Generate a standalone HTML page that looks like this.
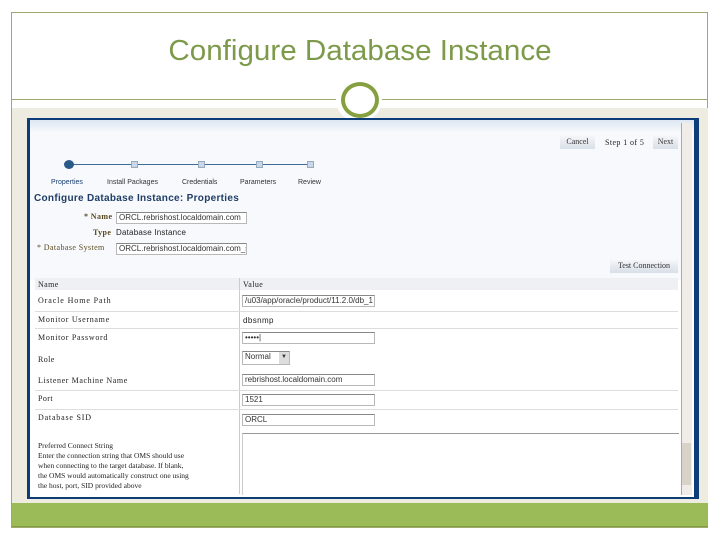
<!DOCTYPE html>
<html><head><meta charset="utf-8"><style>
*{margin:0;padding:0;box-sizing:border-box}
body{width:720px;height:540px;background:#fff;position:relative;overflow:hidden;font-family:"Liberation Serif",serif}
.a{position:absolute}
.s{font-family:"Liberation Sans",sans-serif}
.inp{position:absolute;background:#fff;border:1px solid #b8b8b8;border-top-color:#888;height:12px;font:8px "Liberation Sans",sans-serif;color:#333;padding-left:2px;line-height:10px;white-space:nowrap;overflow:hidden}
.lbl{position:absolute;font-size:8px;color:#222;white-space:nowrap;letter-spacing:0.4px}
.btn{position:absolute;background:linear-gradient(#f4f6f9,#d8dfe8);font-size:8px;color:#333;text-align:center;line-height:12px;height:13px}
.hl{position:absolute;left:35px;width:643px;height:1px;background:#ddd}
</style></head><body>
<div class="a" style="left:11px;top:12px;width:697px;height:516px;border:1px solid #a0a870"></div>
<div class="a s" style="left:0;top:35px;width:720px;text-align:center;font-size:29px;color:#7d9a4a;font-family:'Liberation Sans',sans-serif;transform:scaleX(1.02)">Configure Database Instance</div>
<div class="a" style="left:11px;top:99px;width:697px;height:1px;background:#a0a870"></div>
<div class="a" style="left:12px;top:108px;width:696px;height:395px;background:#eeece1"></div>
<div class="a" style="left:12px;top:503px;width:696px;height:24px;background:#9bbb59;border-bottom:1px solid #80a040"></div>
<div class="a" style="left:336px;top:78px;width:46px;height:44px;border-radius:50%;background:#fff"></div>
<div class="a" style="left:341px;top:82px;width:38px;height:36px;border-radius:50%;border:4px solid #86a040"></div>
<!-- screenshot -->
<div class="a" style="left:27px;top:118px;width:672px;height:381px;background:#0d3d78"></div>
<div class="a" style="left:30px;top:120px;width:664px;height:377px;background:linear-gradient(#dde6f2 0,#f7f9fc 12px,#f7f9fc 160px,#fff 160px)"></div>
<div class="a" style="left:681px;top:123px;width:11px;height:372px;background:#f0ede8;border-left:1px solid #aaa"></div>
<div class="a" style="left:682px;top:443px;width:9px;height:42px;background:#d8d2c8"></div>
<div class="btn" style="left:560px;top:136px;width:35px">Cancel</div>
<div class="lbl" style="left:605px;top:138px">Step 1 of 5</div>
<div class="btn" style="left:653px;top:136px;width:25px">Next</div>
<div class="a" style="left:69px;top:164px;width:242px;height:1px;background:#3c6b9a"></div>
<div class="a" style="left:64px;top:160px;width:10px;height:9px;border-radius:50%;background:#2a5a8a"></div>
<div class="a" style="left:131px;top:161px;width:7px;height:7px;background:#c8d8ea;border:1px solid #9ab"></div>
<div class="a" style="left:198px;top:161px;width:7px;height:7px;background:#c8d8ea;border:1px solid #9ab"></div>
<div class="a" style="left:256px;top:161px;width:7px;height:7px;background:#c8d8ea;border:1px solid #9ab"></div>
<div class="a" style="left:307px;top:161px;width:7px;height:7px;background:#c8d8ea;border:1px solid #9ab"></div>
<div class="lbl s" style="left:51px;top:179px;font-size:7px;color:#1a3f70;letter-spacing:0">Properties</div>
<div class="lbl s" style="left:107px;top:179px;font-size:7px;color:#333;letter-spacing:0">Install Packages</div>
<div class="lbl s" style="left:182px;top:179px;font-size:7px;color:#333;letter-spacing:0">Credentials</div>
<div class="lbl s" style="left:240px;top:179px;font-size:7px;color:#333;letter-spacing:0">Parameters</div>
<div class="lbl s" style="left:298px;top:179px;font-size:7px;color:#333;letter-spacing:0">Review</div>
<div class="lbl s" style="left:34px;top:193px;font-size:10px;font-weight:bold;color:#1f3d66;letter-spacing:0.3px">Configure Database Instance: Properties</div>
<div class="lbl" style="left:84px;top:212px;color:#5a4a20;font-weight:bold">* Name</div>
<div class="inp" style="left:116px;top:212px;width:131px">ORCL.rebrishost.localdomain.com</div>
<div class="lbl" style="left:93px;top:228px;color:#5a4a20;font-weight:bold">Type</div>
<div class="lbl s" style="left:116px;top:228px;letter-spacing:0.2px">Database Instance</div>
<div class="lbl" style="left:37px;top:243px;color:#5a4a20">* Database System</div>
<div class="inp" style="left:116px;top:243px;width:131px">ORCL.rebrishost.localdomain.com_s</div>
<div class="btn" style="left:610px;top:260px;width:68px">Test Connection</div>
<div class="a" style="left:35px;top:278px;width:643px;height:12px;background:#eef0f3"></div>
<div class="a" style="left:239px;top:278px;width:1px;height:216px;background:#ccc"></div>
<div class="lbl" style="left:38px;top:280px">Name</div>
<div class="lbl" style="left:243px;top:280px">Value</div>
<div class="hl" style="top:311px"></div><div class="hl" style="top:328px"></div><div class="hl" style="top:390px"></div><div class="hl" style="top:409px"></div>
<div class="lbl" style="left:38px;top:296px;letter-spacing:0.9px">Oracle Home Path</div>
<div class="inp" style="left:242px;top:295px;width:133px">/u03/app/oracle/product/11.2.0/db_1</div>
<div class="lbl" style="left:38px;top:315px;letter-spacing:0.7px">Monitor Username</div>
<div class="lbl s" style="left:243px;top:316px">dbsnmp</div>
<div class="lbl" style="left:38px;top:333px;letter-spacing:0.7px">Monitor Password</div>
<div class="inp" style="left:242px;top:332px;width:133px">•••••|</div>
<div class="lbl" style="left:38px;top:355px">Role</div>
<div class="inp" style="left:242px;top:351px;width:48px;height:14px">Normal<span style="position:absolute;right:0;top:0;width:10px;height:12px;background:#ddd;font-size:6px;text-align:center">▼</span></div>
<div class="lbl" style="left:38px;top:376px;letter-spacing:0.6px">Listener Machine Name</div>
<div class="inp" style="left:242px;top:374px;width:133px">rebrishost.localdomain.com</div>
<div class="lbl" style="left:38px;top:394px">Port</div>
<div class="inp" style="left:242px;top:394px;width:133px">1521</div>
<div class="lbl" style="left:38px;top:413px;letter-spacing:0.8px">Database SID</div>
<div class="inp" style="left:242px;top:414px;width:133px">ORCL</div>
<div class="a" style="left:242px;top:433px;width:437px;height:62px;border-top:1px solid #999;border-left:1px solid #ccc;background:#fff"></div>
<div class="lbl" style="left:38px;top:441px;line-height:10px;font-size:7.5px;letter-spacing:0">Preferred Connect String<br>Enter the connection string that OMS should use<br>when connecting to the target database. If blank,<br>the OMS would automatically construct one using<br>the host, port, SID provided above</div>
</body></html>
